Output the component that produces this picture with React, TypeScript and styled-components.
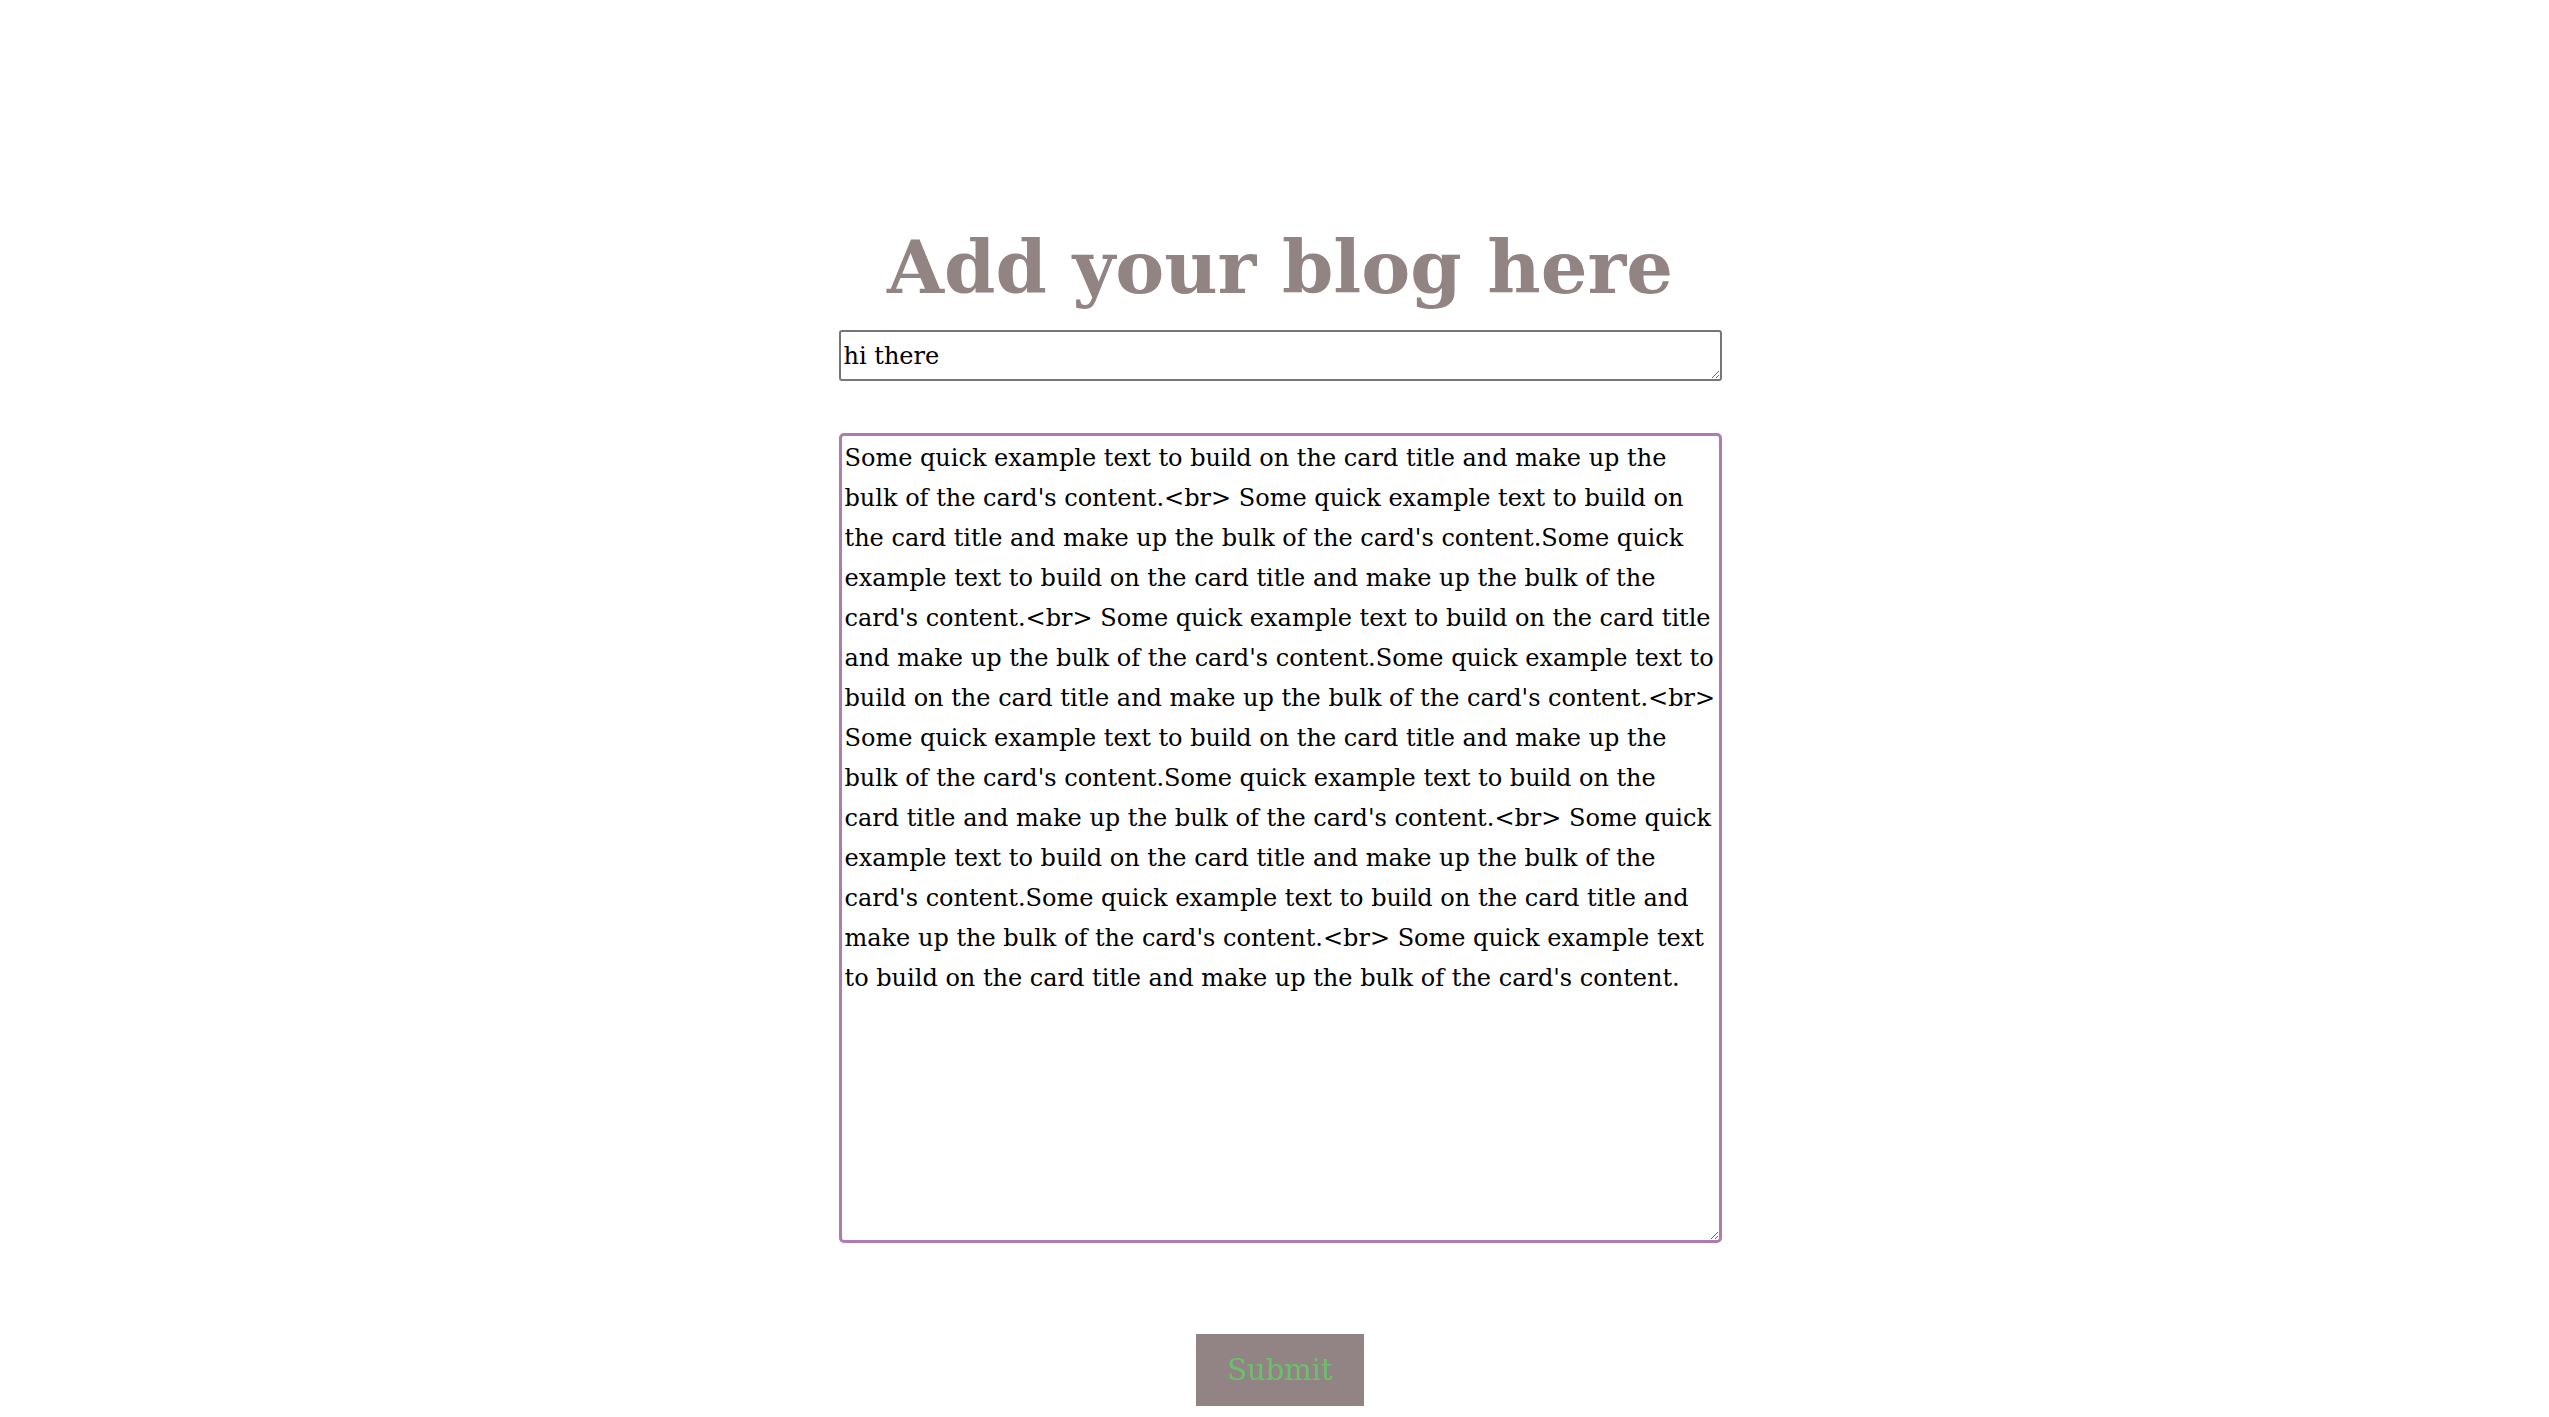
import React, { useState } from "react";
import styled, { createGlobalStyle } from "styled-components";

const GlobalStyle = createGlobalStyle`
  html, body { margin: 0; padding: 0; background: #ffffff; }
  body { font-family: "DejaVu Serif", "Liberation Serif", serif; }
`;

const Page = styled.main`
  display: flex;
  justify-content: center;
  padding: 222px 0 0 11px;
  box-sizing: border-box;
  width: 100%;
`;

const Form = styled.form`
  width: 883px;
  display: flex;
  flex-direction: column;
  align-items: center;
`;

const Title = styled.h1`
  margin: 0 0 18px;
  font-family: "DejaVu Serif", serif;
  font-weight: 700;
  font-size: 73.5px;
  line-height: 90px;
  color: #938484;
  text-align: center;
  white-space: nowrap;
`;

const Field = styled.textarea<{ $tall?: boolean }>`
  display: block;
  width: 100%;
  box-sizing: border-box;
  height: ${(p) => (p.$tall ? "810px" : "51px")};
  margin-top: ${(p) => (p.$tall ? "52px" : "0")};
  padding: ${(p) => (p.$tall ? "2px 3px 0 3px" : "4px 3px 0 3px")};
  border: ${(p) => (p.$tall ? "3px solid #b07ab3" : "2px solid #767676")};
  border-radius: ${(p) => (p.$tall ? "5px" : "3px")};
  font-family: "DejaVu Serif", serif;
  font-size: 24px;
  line-height: 40px;
  color: #000;
  background: #fff;
  outline: none;
  overflow: hidden;
`;

const SubmitButton = styled.button`
  margin-top: 91px;
  width: 168px;
  height: 72px;
  border: none;
  background: #928484;
  color: #6bbf6a;
  font-family: "DejaVu Serif", serif;
  font-size: 29px;
  cursor: pointer;
`;

const para =
  "Some quick example text to build on the card title and make up the bulk of the card's content.<br> Some quick example text to build on the card title and make up the bulk of the card's content.";

export default function App() {
  const [title, setTitle] = useState("hi there");
  const [body, setBody] = useState(para + para + para + para + para);
  return (
    <>
      <GlobalStyle />
      <Page>
        <Form onSubmit={(e) => e.preventDefault()}>
          <Title>Add your blog here</Title>
          <Field value={title} onChange={(e) => setTitle(e.target.value)} spellCheck={false} />
          <Field $tall value={body} onChange={(e) => setBody(e.target.value)} spellCheck={false} />
          <SubmitButton type="submit">Submit</SubmitButton>
        </Form>
      </Page>
    </>
  );
}
